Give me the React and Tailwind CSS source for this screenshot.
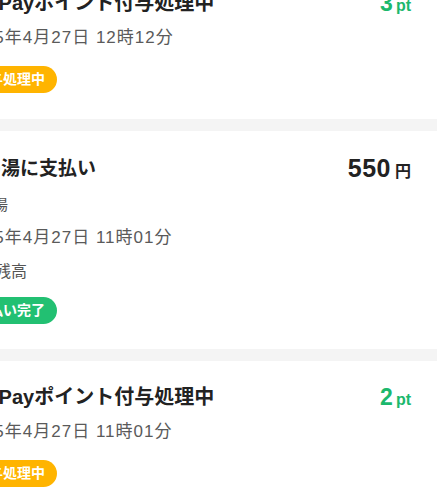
import React from "react";

const items = [
  {
    title: "PayPayポイント付与処理中",
    date: "2025年4月27日 12時12分",
    amount: "3",
    unit: "pt",
    status: "付与処理中",
    kind: "point",
  },
  {
    title: "松の湯に支払い",
    store: "松の湯",
    date: "2025年4月27日 11時01分",
    method: "銀行残高",
    amount: "550",
    unit: "円",
    status: "支払い完了",
    kind: "payment",
  },
  {
    title: "PayPayポイント付与処理中",
    date: "2025年4月27日 11時01分",
    amount: "2",
    unit: "pt",
    status: "付与処理中",
    kind: "point",
  },
];

const font = {
  fontFamily: '"Liberation Sans", "Noto Sans CJK JP", sans-serif',
};

const HistoryRow = ({ item }) => {
  const isPoint = item.kind === "point";

  return (
    <div
      className={`bg-white pt-[23px] pr-[26px] ${
        isPoint ? "pb-[26px]" : "pb-[25px]"
      }`}
    >
      <div
        className={`flex items-center justify-between ${
          isPoint ? "h-[26px]" : "h-[30px]"
        }`}
      >
        <span
          className={`font-semibold text-[#222] ${
            isPoint ? "text-[20px]" : "text-[19px]"
          }`}
        >
          {item.title}
        </span>
        {isPoint ? (
          <span className="flex items-baseline gap-[3px] text-[#1cb86d]">
            <span className="text-[23px] font-semibold">{item.amount}</span>
            <span className="text-[16px] font-semibold">{item.unit}</span>
          </span>
        ) : (
          <span className="flex items-baseline gap-[4px] text-[#222]">
            <span className="text-[25px] font-semibold tracking-[0.5px]">
              {item.amount}
            </span>
            <span className="text-[16px] font-semibold">{item.unit}</span>
          </span>
        )}
      </div>

      {item.store && (
        <div className="mt-[11px] h-[20px] text-[15px] leading-[20px] text-[#555]">
          {item.store}
        </div>
      )}

      <div
        className={`${
          item.store ? "mt-[11px]" : "mt-[10px]"
        } h-[24px] text-[17px] leading-[24px] tracking-[1px] text-[#5a5a5a]`}
      >
        {item.date}
      </div>

      {item.method && (
        <div className="mt-[12px] h-[20px] text-[16px] leading-[20px] text-[#555]">
          {item.method}
        </div>
      )}

      <div className={item.method ? "mt-[15px]" : "mt-[16px]"}>
        <span
          className={`inline-flex h-[27px] items-center rounded-full px-[12px] text-[14px] font-bold text-white ${
            isPoint ? "bg-[#ffb400]" : "bg-[#22c072]"
          }`}
        >
          {item.status}
        </span>
      </div>
    </div>
  );
};

export default function App() {
  return (
    <div className="h-[495px] w-[437px] overflow-hidden bg-white" style={font}>
      <div className="-ml-[37px] -mt-[33px] flex w-[474px] flex-col gap-[12px] bg-[#f4f4f4]">
        {items.map((item, i) => (
          <HistoryRow key={i} item={item} />
        ))}
      </div>
    </div>
  );
}
